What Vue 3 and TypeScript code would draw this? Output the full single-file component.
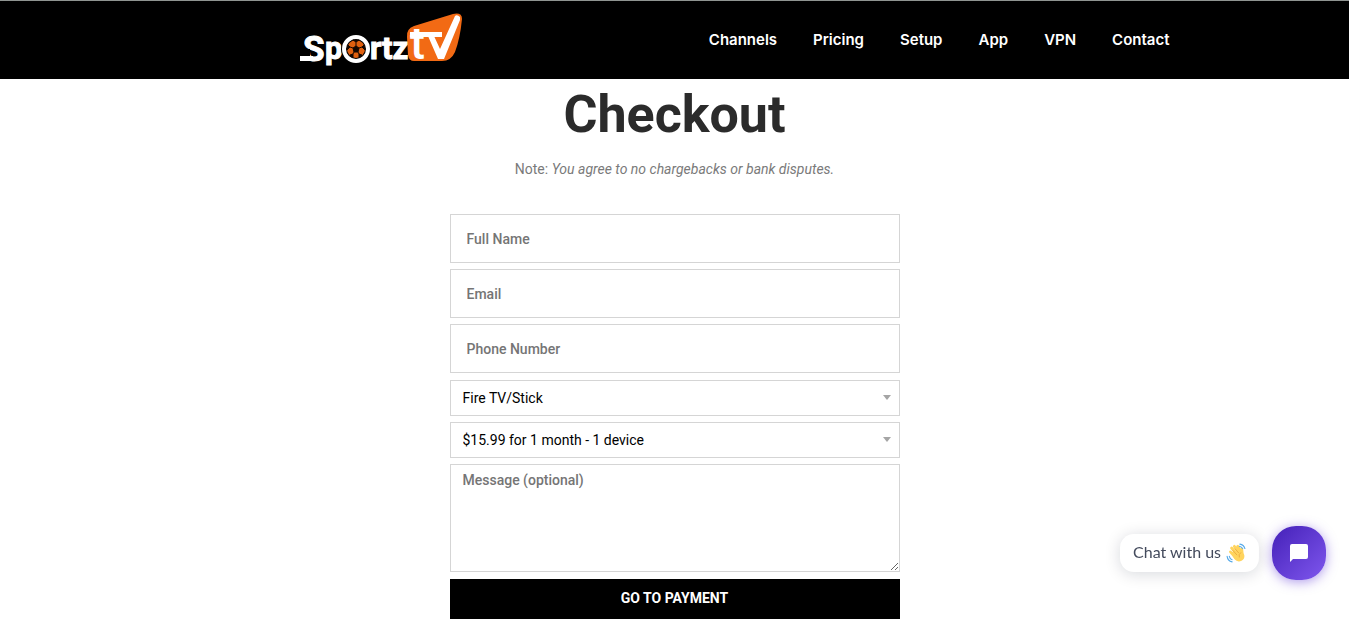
<script setup lang="ts">
import { ref } from 'vue'

const links: string[] = ['Channels', 'Pricing', 'Setup', 'App', 'VPN', 'Contact']

interface TextField {
  id: string
  label: string
  type: string
}

const fields: TextField[] = [
  { id: 'full-name', label: 'Full Name', type: 'text' },
  { id: 'email', label: 'Email', type: 'email' },
  { id: 'phone', label: 'Phone Number', type: 'tel' },
]

const values = ref<Record<string, string>>({ 'full-name': '', email: '', phone: '' })
const device = ref('Fire TV/Stick')
const plan = ref('$15.99 for 1 month - 1 device')
const message = ref('')
</script>

<template>
  <div class="page">
    <header class="header">
      <div class="header-inner">
        <a class="logo" href="#" aria-label="Sportz TV">
          <svg width="164" height="68" viewBox="0 -6 164 68" aria-hidden="true">
            <path
              d="M107 25Q106 17 114 14L153 2Q162 0 162 7Q160 27 155 40Q151 49 142 49L114 49Q109 49 108 43Z"
              fill="#f26a14"
            />
            <g class="wordmark">
              <text class="capital" x="3" y="49">S</text>
              <text x="25" y="47">p</text>
              <text x="70" y="47">rtz</text>
            </g>
            <path d="M0 37H10V44H0Z" fill="#000" />
            <path d="M0 44H13V49H0Z" fill="#fff" />
            <circle cx="56" cy="37" r="15" fill="#000" />
            <circle cx="56" cy="37" r="12" fill="#000" stroke="#fff" stroke-width="4" />
            <circle cx="56" cy="37" r="9" fill="#e0600f" />
            <g fill="#140700" stroke="#140700">
              <path d="M56 34L59 36L58 40H54L53 36Z" />
              <path d="M53 28H59L56 30Z" />
              <path d="M64 33L65 38L62 35Z" />
              <path d="M48 33L47 38L50 35Z" />
              <path d="M62 43L59 46L59 42Z" />
              <path d="M50 43L53 46L53 42Z" />
              <path
                d="M56 34V30M59 36L62 35M58 40L59 42M54 40L53 42M53 36L50 35"
                fill="none"
              />
            </g>
            <text class="tv" x="110" y="47">t</text>
            <path d="M110 20H142V25H110Z" fill="#fff" />
            <path d="M128 24H134L140 37L155 4Q157 2 160 5L160 8L144 47H138Z" fill="#fff" />
          </svg>
        </a>
        <nav class="nav" aria-label="Main">
          <a v-for="link in links" :key="link" href="#">{{ link }}</a>
        </nav>
      </div>
    </header>

    <main class="checkout">
      <h1>Checkout</h1>
      <p class="note">Note: <em>You agree to no chargebacks or bank disputes.</em></p>

      <form class="form" @submit.prevent>
        <div class="group">
          <input
            v-for="field in fields"
            :id="field.id"
            :key="field.id"
            v-model="values[field.id]"
            class="control text"
            :type="field.type"
            :placeholder="field.label"
            :aria-label="field.label"
          />
        </div>
        <div class="group">
          <div class="select-wrap">
            <select v-model="device" class="control select" aria-label="Device">
              <option>Fire TV/Stick</option>
            </select>
            <svg class="caret" width="10" height="6" viewBox="0 0 10 6" aria-hidden="true">
              <path d="M1 0H9L5 5Z" />
            </svg>
          </div>
          <div class="select-wrap">
            <select v-model="plan" class="control select" aria-label="Plan">
              <option>$15.99 for 1 month - 1 device</option>
            </select>
            <svg class="caret" width="10" height="6" viewBox="0 0 10 6" aria-hidden="true">
              <path d="M1 0H9L5 5Z" />
            </svg>
          </div>
          <textarea
            v-model="message"
            class="control message"
            placeholder="Message (optional)"
            aria-label="Message (optional)"
          ></textarea>
        </div>
        <button class="submit" type="submit">GO TO PAYMENT</button>
      </form>
    </main>

    <aside class="chat">
      <div class="chat-label">
        <span>Chat with us</span>
        <svg width="20" height="20" viewBox="0 0 36 36" aria-hidden="true">
          <g fill="none" stroke="#ffd45e" stroke-linecap="round" stroke-width="5">
            <path d="M8 16L18 27M10 9L21 22M15 6L25 19M21 6L28 17" />
          </g>
          <path d="M8 17L25 13L27 9Q31 7 31 12Q31 17 33 22Q34 29 28 32Q21 36 15 29Z" fill="#ffd45e" />
          <path d="M12 13L20 22M16 10L23 18M27 17Q22 20 24 26" fill="none" stroke="#e9a53c" stroke-width="1.500" />
          <g fill="none" stroke="#55a9e8" stroke-linecap="round" stroke-width="2">
            <path d="M25 2Q32 3 34 10M24 6Q28 7 30 10M2 24Q3 32 11 34M6 24Q7 29 11 30" />
          </g>
        </svg>
      </div>
      <button class="chat-button" type="button" aria-label="Open chat">
        <svg width="20" height="20" viewBox="0 0 20 20" aria-hidden="true">
          <path d="M3 1H17Q19 1 19 3V14Q19 16 17 16H4L1 19V3Q1 1 3 1Z" fill="#fff" />
        </svg>
      </button>
    </aside>
  </div>
</template>

<style>
body {
  margin: 0;
  background: #fff;
}
</style>

<style scoped>
.page {
  font-family: Roboto, "Liberation Sans", sans-serif;
  font-size: 14px;
  color: #7a7a7a;
}

.header {
  background: #000;
  border-top: 1px solid #8f9491;
}

.header-inner {
  box-sizing: border-box;
  display: flex;
  align-items: center;
  justify-content: space-between;
  max-width: 990px;
  height: 78px;
  margin: 0 auto;
  padding-left: 120px;
}

.logo,
.logo svg {
  display: block;
}

.wordmark {
  font-size: 31px;
  font-weight: 700;
  fill: #fff;
  stroke: #fff;
}

.capital {
  font-size: 35px;
}

.tv {
  font-size: 45px;
  font-weight: 500;
  fill: #fff;
}

.nav {
  display: flex;
  gap: 36px;
}

.nav a {
  color: #fff;
  font-family: Inter, "Liberation Sans", sans-serif;
  font-size: 15px;
  font-weight: 600;
  line-height: 24px;
  text-decoration: none;
}

.checkout {
  box-sizing: border-box;
  max-width: 450px;
  margin: 0 auto;
  padding: 8px 0 6px;
}

h1 {
  margin: 0;
  color: #2b2b2b;
  font-size: 52px;
  font-weight: 700;
  line-height: 56px;
  text-align: center;
}

.note {
  margin: 16px 0 35px;
  line-height: 20px;
  text-align: center;
}

.form,
.group {
  display: flex;
  flex-direction: column;
}

.form {
  gap: 7px;
}

.group {
  gap: 6px;
}

.control {
  box-sizing: border-box;
  display: block;
  width: 100%;
  margin: 0;
  border: 1px solid #d5d5d5;
  border-radius: 0;
  background: #fff;
  color: #000;
  font-family: inherit;
  font-size: 14px;
}

.control::placeholder {
  color: #757575;
  font-weight: 500;
  opacity: 1;
}

.text {
  height: 49px;
  padding: 0 16px;
}

.select-wrap {
  position: relative;
}

.select {
  height: 36px;
  padding: 0 12px;
  appearance: none;
}

.caret {
  position: absolute;
  top: 15px;
  right: 8px;
  fill: #a5a5a5;
  pointer-events: none;
}

.message {
  height: 108px;
  padding: 5px 12px;
  line-height: 20px;
  resize: vertical;
}

.submit {
  height: 40px;
  padding: 0 0 2px;
  border: 0;
  background: #000;
  color: #fff;
  font-family: inherit;
  font-size: 14px;
  font-weight: 700;
}

.chat {
  position: fixed;
  right: 23px;
  bottom: 45px;
  display: flex;
  align-items: center;
  gap: 13px;
}

.chat-label {
  box-sizing: border-box;
  display: flex;
  align-items: center;
  gap: 5px;
  height: 38px;
  padding: 0 13px;
  border-radius: 14px;
  background: #fff;
  box-shadow: 0 2px 16px rgba(0, 18, 46, 0.16);
  color: #434a5c;
  font-family: Lato, "Open Sans", sans-serif;
  font-size: 16px;
  line-height: 20px;
}

.chat-label span {
  padding-bottom: 2px;
}

.chat-button {
  display: grid;
  place-items: center;
  width: 54px;
  height: 54px;
  padding: 0;
  border: 0;
  border-radius: 24px;
  background: linear-gradient(135deg, #4420b8, #7f57ee);
  box-shadow: 0 2px 12px rgba(96, 56, 215, 0.5);
}
</style>
